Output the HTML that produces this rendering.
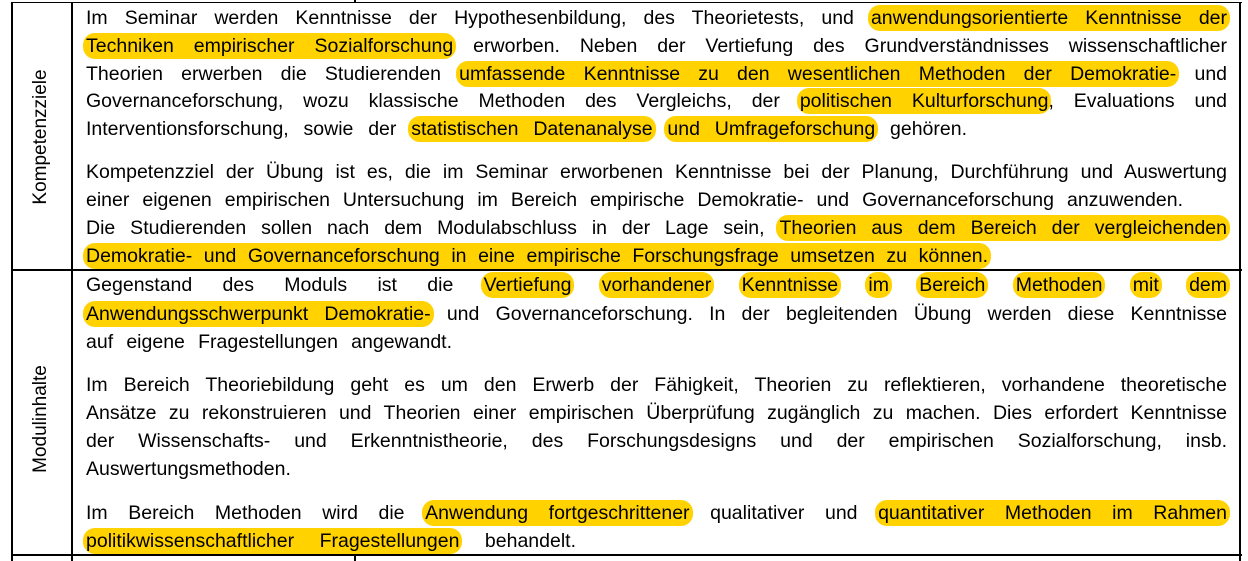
<!DOCTYPE html>
<html><head><meta charset="utf-8"><style>
body{margin:0;width:1248px;height:561px;background:#fff;position:relative;overflow:hidden;font-family:"Liberation Sans",sans-serif;color:#000}
.v{position:absolute;width:2px;background:#000}
.h{position:absolute;height:2px;background:#000}
.l{position:absolute;left:86px;height:28px;line-height:28px;font-size:19.5px;text-align:justify;text-align-last:justify;white-space:nowrap}
.m{background:#ffd200;border-radius:12px;padding:2px 3px;margin:0 -3px}
.rot{position:absolute;font-size:19px;transform:translate(-50%,-50%) rotate(-90deg);white-space:nowrap}
</style></head><body>
<div class="h" style="left:11px;top:2px;width:1231px;height:1px"></div>
<div class="h" style="left:11px;top:269px;width:1231px"></div>
<div class="h" style="left:11px;top:554px;width:1231px"></div>
<div class="v" style="left:11px;top:2px;height:559px"></div>
<div class="v" style="left:71px;top:2px;height:559px"></div>
<div class="v" style="left:1239px;top:2px;height:559px"></div>
<div class="v" style="left:354px;top:0;height:3px"></div>
<div class="v" style="left:354px;top:555px;height:6px"></div>
<div class="rot" style="left:41px;top:137px">Kompetenzziele</div>
<div class="rot" style="left:41px;top:419px">Modulinhalte</div>

<div class="l" style="top:4px;width:1141px">Im Seminar werden Kenntnisse der Hypothesenbildung, des Theorietests, und <span class="m">anwendungsorientierte Kenntnisse der</span></div>
<div class="l" style="top:32px;width:1141px"><span class="m">Techniken empirischer Sozialforschung</span> erworben. Neben der Vertiefung des Grundverständnisses wissenschaftlicher</div>
<div class="l" style="top:60px;width:1141px">Theorien erwerben die Studierenden <span class="m">umfassende Kenntnisse zu den wesentlichen Methoden der Demokratie-</span> und</div>
<div class="l" style="top:87px;width:1141px">Governanceforschung, wozu klassische Methoden des Vergleichs, der <span class="m">politischen Kulturforschung</span>, Evaluations und</div>
<div class="l" style="top:115px;width:881px">Interventionsforschung, sowie der <span class="m">statistischen Datenanalyse</span> <span class="m">und Umfrageforschung</span> gehören.</div>
<div class="l" style="top:158px;width:1141px">Kompetenzziel der Übung ist es, die im Seminar erworbenen Kenntnisse bei der Planung, Durchführung und Auswertung</div>
<div class="l" style="top:186px;width:1097px">einer eigenen empirischen Untersuchung im Bereich empirische Demokratie- und Governanceforschung anzuwenden.</div>
<div class="l" style="top:214px;width:1141px">Die Studierenden sollen nach dem Modulabschluss in der Lage sein, <span class="m">Theorien aus dem Bereich der vergleichenden</span></div>
<div class="l" style="top:242px;width:902px"><span class="m">Demokratie- und Governanceforschung in eine empirische Forschungsfrage umsetzen zu können.</span></div>

<div class="l" style="top:271px;width:1141px">Gegenstand des Moduls ist die <span class="m">Vertiefung</span> <span class="m">vorhandener</span> <span class="m">Kenntnisse</span> <span class="m">im</span> <span class="m">Bereich</span> <span class="m">Methoden</span> <span class="m">mit</span> <span class="m">dem</span></div>
<div class="l" style="top:300px;width:1141px"><span class="m">Anwendungsschwerpunkt Demokratie-</span> und Governanceforschung. In der begleitenden Übung werden diese Kenntnisse</div>
<div class="l" style="top:328px;width:366px">auf eigene Fragestellungen angewandt.</div>
<div class="l" style="top:371px;width:1141px">Im Bereich Theoriebildung geht es um den Erwerb der Fähigkeit, Theorien zu reflektieren, vorhandene theoretische</div>
<div class="l" style="top:399px;width:1141px">Ansätze zu rekonstruieren und Theorien einer empirischen Überprüfung zugänglich zu machen. Dies erfordert Kenntnisse</div>
<div class="l" style="top:427px;width:1141px">der Wissenschafts- und Erkenntnistheorie, des Forschungsdesigns und der empirischen Sozialforschung, insb.</div>
<div class="l" style="top:455px;width:217px">Auswertungsmethoden.</div>
<div class="l" style="top:499px;width:1141px">Im Bereich Methoden wird die <span class="m">Anwendung fortgeschrittener</span> qualitativer und <span class="m">quantitativer Methoden im Rahmen</span></div>
<div class="l" style="top:527px;width:490px"><span class="m">politikwissenschaftlicher Fragestellungen</span> behandelt.</div>
</body></html>
